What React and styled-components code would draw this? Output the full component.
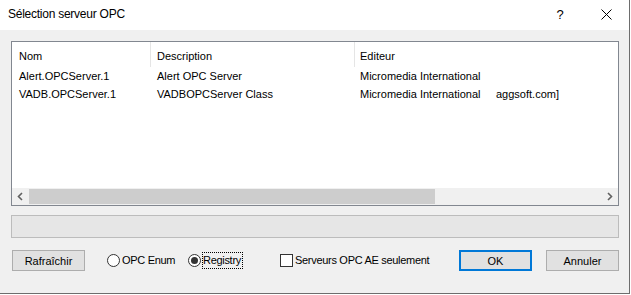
import React from 'react'
import styled, { createGlobalStyle } from 'styled-components'

const GlobalStyle = createGlobalStyle`
  html, body {
    margin: 0;
    padding: 0;
    background: #ffffff;
  }
  * { box-sizing: border-box; }
`

const Window = styled.div`
  width: 630px;
  height: 294px;
  display: flex;
  flex-direction: column;
  border-right: 1px solid #6d6d6d;
  border-bottom: 1px solid #6d6d6d;
  font-family: 'Liberation Sans', Arial, sans-serif;
  font-size: 11px;
  color: #000;
`

const TitleBar = styled.div`
  height: 30px;
  background: #ffffff;
  display: flex;
  align-items: center;
  padding: 0 0 2px 8px;
`

const TitleText = styled.div`
  font-size: 12px;
  letter-spacing: -0.25px;
  flex: 1;
`

const TitleButton = styled.div`
  width: ${p => p.w}px;
  height: 28px;
  display: flex;
  align-items: center;
  justify-content: center;
  font-size: 13px;
`

const Body = styled.div`
  flex: 1;
  background: #f0f0f0;
  padding: 11px 10px 0 11px;
  display: flex;
  flex-direction: column;
`

const ListBox = styled.div`
  height: 165px;
  border: 1px solid #828790;
  background: #ffffff;
  display: flex;
  flex-direction: column;
`

const Grid = styled.div`
  display: grid;
  grid-template-columns: 139px 204px 141px 1fr;
`

const HeadCell = styled.div`
  height: 25px;
  display: flex;
  align-items: center;
  padding-left: ${p => p.pad}px;
  padding-top: 2px;
  border-right: ${p => (p.divider ? '1px solid #e5e5e5' : 'none')};
`

const Cell = styled.div`
  height: 18px;
  display: flex;
  align-items: center;
  padding-left: ${p => p.pad}px;
  white-space: nowrap;
`

const Spacer = styled.div`
  flex: 1;
`

const HScroll = styled.div`
  height: 17px;
  background: #f0f0f0;
  display: flex;
  align-items: stretch;
`

const ArrowBtn = styled.div`
  width: 17px;
  display: flex;
  align-items: center;
  justify-content: center;
`

const Track = styled.div`
  flex: 1;
  display: flex;
  align-items: stretch;
  padding: 1px 0;
`

const Thumb = styled.div`
  width: 406px;
  background: #cdcdcd;
`

const StatusBox = styled.div`
  margin-top: 9px;
  height: 23px;
  border: 1px solid #bcbcbc;
  background: #e6e6e6;
`

const ActionRow = styled.div`
  margin-top: 12px;
  padding-left: 1px;
  display: flex;
  align-items: center;
  height: 21px;
`

const PushButton = styled.div`
  width: 73px;
  height: 21px;
  margin-right: ${p => p.mr || 0}px;
  background: #e1e1e1;
  border: ${p => (p.primary ? '2px solid #0078d7' : '1px solid #adadad')};
  display: flex;
  align-items: center;
  justify-content: center;
  padding-top: 1px;
`

const Option = styled.div`
  width: ${p => p.w}px;
  display: flex;
  align-items: center;
  height: 21px;
`

const RadioCircle = styled.div`
  width: 13px;
  height: 13px;
  border-radius: 50%;
  border: 1px solid #333333;
  background: #ffffff;
  display: flex;
  align-items: center;
  justify-content: center;
  margin-right: 1px;
  &::after {
    content: '';
    display: ${p => (p.checked ? 'block' : 'none')};
    width: 7px;
    height: 7px;
    border-radius: 50%;
    background: #333333;
  }
`

const CheckSquare = styled.div`
  width: 13px;
  height: 13px;
  border: 1px solid #333333;
  background: #ffffff;
  margin-right: 1px;
`

const OptionLabel = styled.span`
  padding: 1px 1px 1px 0;
  letter-spacing: -0.3px;
  border: 1px ${p => (p.focused ? 'dotted #000' : 'solid transparent')};
  line-height: 13px;
`

const Chevron = ({ dir }) => (
  <svg width="7" height="9" viewBox="0 0 7 9">
    <path
      d={dir === 'left' ? 'M5 1 L1.5 4.5 L5 8' : 'M2 1 L5.5 4.5 L2 8'}
      fill="none"
      stroke="#606060"
      strokeWidth="1.6"
    />
  </svg>
)

const rows = [
  ['Alert.OPCServer.1', 'Alert OPC Server', 'Micromedia International', ''],
  ['VADB.OPCServer.1', 'VADBOPCServer Class', 'Micromedia International', 'aggsoft.com]'],
]

export default function App() {
  return (
    <>
      <GlobalStyle />
      <Window>
        <TitleBar>
          <TitleText>Sélection serveur OPC</TitleText>
          <TitleButton w={46}>?</TitleButton>
          <TitleButton w={46}>
            <svg width="11" height="11" viewBox="0 0 11 11">
              <path d="M0.5 0.5 L10.5 10.5 M10.5 0.5 L0.5 10.5" stroke="#000" strokeWidth="1" />
            </svg>
          </TitleButton>
        </TitleBar>
        <Body>
          <ListBox>
            <Grid>
              <HeadCell pad={7} divider>Nom</HeadCell>
              <HeadCell pad={6} divider>Description</HeadCell>
              <HeadCell pad={5}>Editeur</HeadCell>
              <HeadCell pad={0} />
              {rows.map((r, i) => (
                <React.Fragment key={i}>
                  <Cell pad={7}>{r[0]}</Cell>
                  <Cell pad={6}>{r[1]}</Cell>
                  <Cell pad={5}>{r[2]}</Cell>
                  <Cell pad={0}>{r[3]}</Cell>
                </React.Fragment>
              ))}
            </Grid>
            <Spacer />
            <HScroll>
              <ArrowBtn><Chevron dir="left" /></ArrowBtn>
              <Track><Thumb /></Track>
              <ArrowBtn><Chevron dir="right" /></ArrowBtn>
            </HScroll>
          </ListBox>
          <StatusBox />
          <ActionRow>
            <PushButton mr={22}>Rafraîchir</PushButton>
            <Option w={81}>
              <RadioCircle />
              <OptionLabel>OPC Enum</OptionLabel>
            </Option>
            <Option w={92}>
              <RadioCircle checked />
              <OptionLabel focused>Registry</OptionLabel>
            </Option>
            <Option w={179}>
              <CheckSquare />
              <OptionLabel>Serveurs OPC AE seulement</OptionLabel>
            </Option>
            <PushButton primary mr={14}>OK</PushButton>
            <PushButton>Annuler</PushButton>
          </ActionRow>
        </Body>
      </Window>
    </>
  )
}
